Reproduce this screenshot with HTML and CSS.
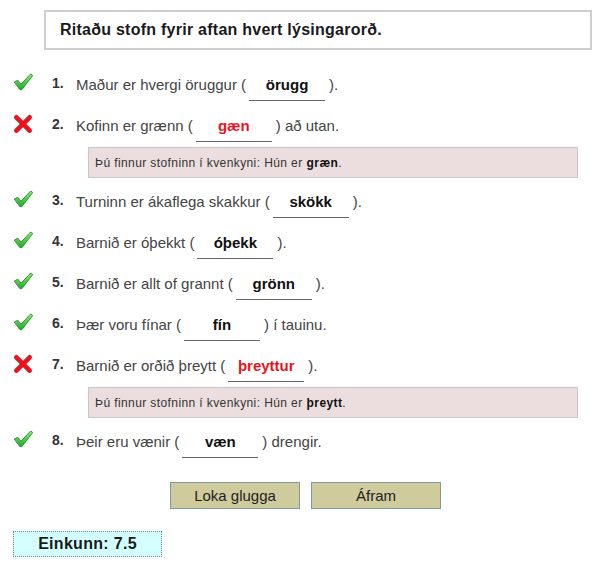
FILE: index.html
```html
<!DOCTYPE html>
<html lang="is">
<head>
<meta charset="utf-8">
<title>Ritaðu stofn</title>
<link rel="stylesheet" href="styles.css">
</head>
<body>
<div class="page">
  <div class="title">Ritaðu stofn fyrir aftan hvert lýsingarorð.</div>

  <div class="row">
    <span class="mark"><svg class="check" viewBox="0 0 20 17"><defs><linearGradient id="g1" x1="0" y1="0" x2="0" y2="1"><stop offset="0" stop-color="#8ef07a"/><stop offset="1" stop-color="#1ea82c"/></linearGradient></defs><path d="M1.2 8.6 L4.6 6.8 L7.6 10.6 L16.8 0.9 L18.8 2.3 L8.4 15.8 L6.6 15.8 Z" fill="url(#g1)" stroke="#2f8f2a" stroke-width="0.9" stroke-linejoin="round"/></svg></span>
    <span class="num">1.</span>
    <span class="text">Maður er hvergi öruggur (<span class="ans">örugg</span>).</span>
  </div>

  <div class="row">
    <span class="mark"><svg class="cross" viewBox="0 0 18 18"><path d="M3 3 L15 15 M15 3 L3 15" stroke="#e8141c" stroke-width="4.2" stroke-linecap="round"/></svg></span>
    <span class="num">2.</span>
    <span class="text">Kofinn er grænn (<span class="ans wrong">gæn</span>) að utan.</span>
  </div>
  <div class="hint">Þú finnur stofninn í kvenkyni: Hún er <b>græn</b>.</div>

  <div class="row">
    <span class="mark"><svg class="check" viewBox="0 0 20 17"><defs><linearGradient id="g3" x1="0" y1="0" x2="0" y2="1"><stop offset="0" stop-color="#8ef07a"/><stop offset="1" stop-color="#1ea82c"/></linearGradient></defs><path d="M1.2 8.6 L4.6 6.8 L7.6 10.6 L16.8 0.9 L18.8 2.3 L8.4 15.8 L6.6 15.8 Z" fill="url(#g3)" stroke="#2f8f2a" stroke-width="0.9" stroke-linejoin="round"/></svg></span>
    <span class="num">3.</span>
    <span class="text">Turninn er ákaflega skakkur (<span class="ans">skökk</span>).</span>
  </div>

  <div class="row">
    <span class="mark"><svg class="check" viewBox="0 0 20 17"><defs><linearGradient id="g4" x1="0" y1="0" x2="0" y2="1"><stop offset="0" stop-color="#8ef07a"/><stop offset="1" stop-color="#1ea82c"/></linearGradient></defs><path d="M1.2 8.6 L4.6 6.8 L7.6 10.6 L16.8 0.9 L18.8 2.3 L8.4 15.8 L6.6 15.8 Z" fill="url(#g4)" stroke="#2f8f2a" stroke-width="0.9" stroke-linejoin="round"/></svg></span>
    <span class="num">4.</span>
    <span class="text">Barnið er óþekkt (<span class="ans">óþekk</span>).</span>
  </div>

  <div class="row">
    <span class="mark"><svg class="check" viewBox="0 0 20 17"><defs><linearGradient id="g5" x1="0" y1="0" x2="0" y2="1"><stop offset="0" stop-color="#8ef07a"/><stop offset="1" stop-color="#1ea82c"/></linearGradient></defs><path d="M1.2 8.6 L4.6 6.8 L7.6 10.6 L16.8 0.9 L18.8 2.3 L8.4 15.8 L6.6 15.8 Z" fill="url(#g5)" stroke="#2f8f2a" stroke-width="0.9" stroke-linejoin="round"/></svg></span>
    <span class="num">5.</span>
    <span class="text">Barnið er allt of grannt (<span class="ans">grönn</span>).</span>
  </div>

  <div class="row">
    <span class="mark"><svg class="check" viewBox="0 0 20 17"><defs><linearGradient id="g6" x1="0" y1="0" x2="0" y2="1"><stop offset="0" stop-color="#8ef07a"/><stop offset="1" stop-color="#1ea82c"/></linearGradient></defs><path d="M1.2 8.6 L4.6 6.8 L7.6 10.6 L16.8 0.9 L18.8 2.3 L8.4 15.8 L6.6 15.8 Z" fill="url(#g6)" stroke="#2f8f2a" stroke-width="0.9" stroke-linejoin="round"/></svg></span>
    <span class="num">6.</span>
    <span class="text">Þær voru fínar (<span class="ans">fín</span>) í tauinu.</span>
  </div>

  <div class="row">
    <span class="mark"><svg class="cross" viewBox="0 0 18 18"><path d="M3 3 L15 15 M15 3 L3 15" stroke="#e8141c" stroke-width="4.2" stroke-linecap="round"/></svg></span>
    <span class="num">7.</span>
    <span class="text">Barnið er orðið þreytt (<span class="ans wrong">þreyttur</span>).</span>
  </div>
  <div class="hint">Þú finnur stofninn í kvenkyni: Hún er <b>þreytt</b>.</div>

  <div class="row">
    <span class="mark"><svg class="check" viewBox="0 0 20 17"><defs><linearGradient id="g8" x1="0" y1="0" x2="0" y2="1"><stop offset="0" stop-color="#8ef07a"/><stop offset="1" stop-color="#1ea82c"/></linearGradient></defs><path d="M1.2 8.6 L4.6 6.8 L7.6 10.6 L16.8 0.9 L18.8 2.3 L8.4 15.8 L6.6 15.8 Z" fill="url(#g8)" stroke="#2f8f2a" stroke-width="0.9" stroke-linejoin="round"/></svg></span>
    <span class="num">8.</span>
    <span class="text">Þeir eru vænir (<span class="ans">væn</span>) drengir.</span>
  </div>

  <div class="buttons">
    <button class="btn">Loka glugga</button>
    <button class="btn">Áfram</button>
  </div>

  <div class="grade">Einkunn: 7.5</div>
</div>
</body>
</html>
```
FILE: styles.css
```css
html, body {
  margin: 0;
  padding: 0;
  background: #fff;
}
body {
  font-family: "Liberation Sans", Arial, sans-serif;
  color: #333;
}
.page {
  display: flex;
  flex-direction: column;
  padding-top: 10px;
}
.title {
  margin-left: 44px;
  width: 548px;
  height: 40px;
  box-sizing: border-box;
  border: 2px solid #cfcfcf;
  font-size: 16px;
  letter-spacing: 0.25px;
  font-weight: bold;
  color: #1a1a1a;
  display: flex;
  align-items: center;
  padding-left: 14px;
  margin-bottom: 14px;
}
.row {
  height: 41px;
  display: flex;
  align-items: center;
}
.mark {
  width: 46px;
  display: flex;
  justify-content: center;
}
.check {
  width: 21px;
  height: 18px;
  margin-top: -6px;
}
.cross {
  width: 20px;
  height: 20px;
  margin-top: -4px;
}
.num {
  width: 30px;
  box-sizing: border-box;
  padding-left: 6px;
  font-size: 14px;
  font-weight: bold;
  color: #333;
  margin-top: -4px;
}
.text {
  font-size: 15px;
  line-height: 18px;
  color: #444;
}
.ans {
  display: inline-block;
  width: 76px;
  text-align: center;
  border-bottom: 1px solid #666;
  font-weight: bold;
  font-size: 15px;
  color: #111;
  margin: 0 4px -7px 3px;
  padding-bottom: 6px;
  line-height: 18px;
  vertical-align: baseline;
}
.ans.wrong {
  color: #e8141c;
}
.hint {
  margin: 1px 0 3px 88px;
  width: 490px;
  height: 31px;
  box-sizing: border-box;
  background: #ecdede;
  border: 1px solid #cdc4c4;
  font-size: 12px;
  letter-spacing: 0.4px;
  color: #333;
  display: flex;
  align-items: center;
  padding-left: 6px;
}
.hint b {
  color: #111;
  margin-left: 4px;
}
.buttons {
  display: flex;
  gap: 11px;
  margin: 20px 0 0 170px;
}
.btn {
  width: 130px;
  height: 27px;
  background: #cfcb9d;
  border: 1px solid #7f9a9a;
  font-family: "Liberation Sans", Arial, sans-serif;
  font-size: 15px;
  color: #222;
  padding: 0;
}
.grade {
  margin: 22px 0 0 13px;
  width: 149px;
  height: 26px;
  box-sizing: border-box;
  background: #d4ffff;
  border: 1px dotted #5e8f9a;
  font-size: 16px;
  letter-spacing: 0.3px;
  font-weight: bold;
  color: #1a1a1a;
  display: flex;
  align-items: center;
  justify-content: center;
}
```
